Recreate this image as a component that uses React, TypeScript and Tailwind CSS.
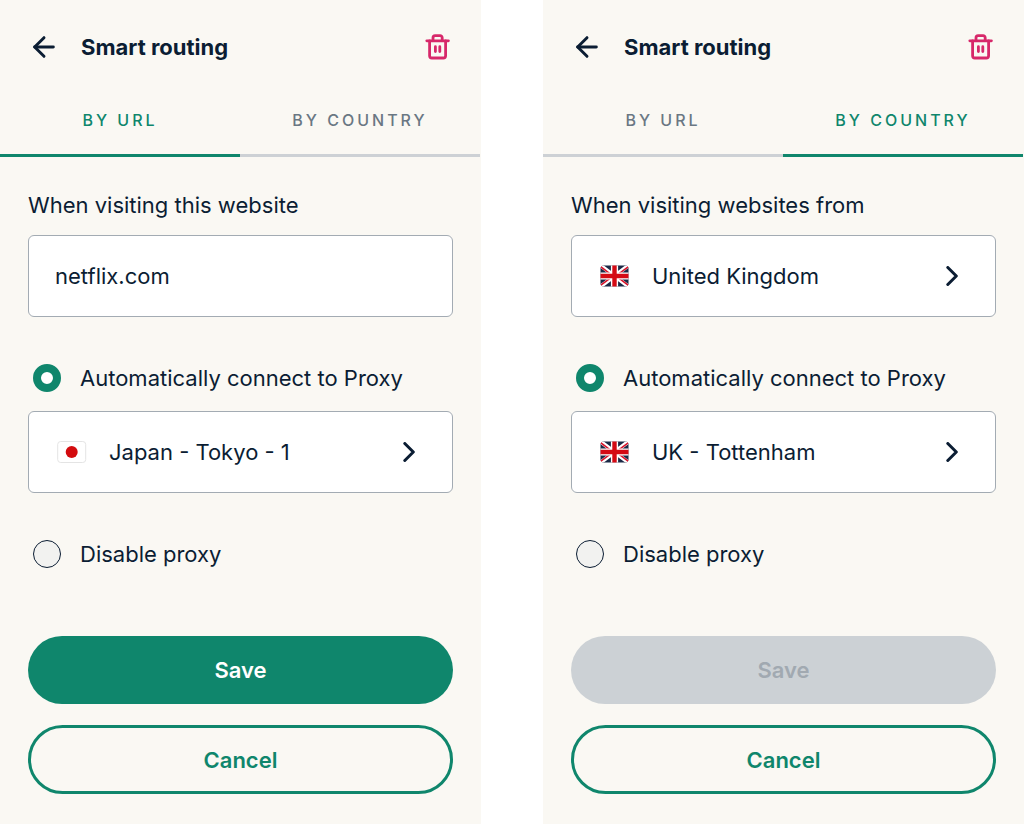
import { useId, useState } from "react";
import { ArrowLeft } from "lucide-react";
import clsx from "clsx";

type Mode = "url" | "country";
type Country = "jp" | "uk";

function TrashIcon() {
  return (
    <svg
      width="26"
      height="26"
      viewBox="0 0 26 26"
      fill="none"
      stroke="currentColor"
      strokeWidth="2.8"
      strokeLinecap="round"
      strokeLinejoin="round"
      aria-hidden="true"
    >
      <path d="M1.8 6.8h21.6" />
      <path d="M4.6 7v14.7a2.3 2.3 0 0 0 2.3 2.3h11.4a2.3 2.3 0 0 0 2.3-2.3V7" />
      <path d="M8 6.5V3.7a2.1 2.1 0 0 1 2.1-2.1h5a2.1 2.1 0 0 1 2.1 2.1v2.8" />
      <path d="M10.4 12.7v4.9M14.8 12.7v4.9" />
    </svg>
  );
}

function ChevronIcon() {
  return (
    <svg
      width="12"
      height="20"
      viewBox="0 0 12 20"
      fill="none"
      stroke="currentColor"
      strokeWidth="3"
      strokeLinecap="round"
      strokeLinejoin="round"
      aria-hidden="true"
    >
      <path d="M1.8 1.5 10.3 10l-8.5 8.5" />
    </svg>
  );
}

function Flag({ country }: { country: Country }) {
  const clip = useId();

  if (country === "jp") {
    return (
      <svg width="30" height="22" viewBox="0 0 30 22" aria-hidden="true">
        <rect x="0.7" y="0.5" width="28" height="21" rx="3" fill="#fff" stroke="#e4e4e4" />
        <circle cx="14.7" cy="11" r="6" fill="#d30b0e" />
      </svg>
    );
  }

  return (
    <svg width="30" height="22" viewBox="0 0 30 22" aria-hidden="true">
      <clipPath id={clip}>
        <rect x="0.5" y="0.5" width="28" height="21" rx="3" />
      </clipPath>
      <g clipPath={`url(#${clip})`}>
        <rect width="30" height="22" fill="#1a2845" />
        <path d="M.5 .5l28 21M28.5 .5l-28 21" stroke="#fff" strokeWidth="4" />
        <path
          d="M0 1.2l10.5 7.9M29 20.8l-10.5-7.9M28.8 1.4l-10.4 7.8M.2 20.6l10.4-7.8"
          stroke="#d8142b"
          strokeWidth="1.5"
        />
        <path d="M14.5 0v22M0 11h30" stroke="#fff" strokeWidth="7.2" />
        <path d="M14.5 0v22M0 11h30" stroke="#d40a14" strokeWidth="4.4" />
      </g>
    </svg>
  );
}

function LocationButton({
  country,
  name,
  label,
  className,
}: {
  country: Country;
  name: string;
  label: string;
  className?: string;
}) {
  return (
    <button
      type="button"
      aria-label={`${label}: ${name}`}
      className={clsx(
        "flex h-[82px] w-full items-center rounded-md border border-[#a3abb3] bg-white pr-[37px] pl-7 text-left",
        className
      )}
    >
      <Flag country={country} />
      <span className="ml-[22px] flex-1">{name}</span>
      <ChevronIcon />
    </button>
  );
}

function Radio({
  name,
  label,
  checked,
  onChange,
}: {
  name: string;
  label: string;
  checked: boolean;
  onChange: () => void;
}) {
  return (
    <label className="mt-[47px] flex items-center gap-[19px] pl-[5px]">
      <input
        type="radio"
        name={name}
        checked={checked}
        onChange={onChange}
        className="size-7 shrink-0 appearance-none rounded-full border border-[#0b1d33] bg-[#f2f2f0] checked:border-8 checked:border-[#0f866c] checked:bg-white"
      />
      {label}
    </label>
  );
}

function SmartRouting({
  initialMode,
  proxy,
  proxyCountry,
  canSave,
}: {
  initialMode: Mode;
  proxy: string;
  proxyCountry: Country;
  canSave: boolean;
}) {
  const id = useId();
  const [mode, setMode] = useState<Mode>(initialMode);
  const [url, setUrl] = useState("netflix.com");
  const [action, setAction] = useState("connect");

  const tabClass = (active: boolean) =>
    clsx(
      "flex-1 border-b-3 pt-[14px] pb-[22px] text-base leading-6 font-medium tracking-[3px]",
      active ? "border-[#0f866c] text-[#0f866c]" : "border-[#cdd1d5] text-[#6a7783]"
    );

  return (
    <section className="min-h-screen bg-[#faf8f3] pb-[30px] text-[22px] leading-7 text-[#0b1d33]">
      <header className="flex h-[94px] items-center pr-[30px] pl-7">
        <button type="button" aria-label="Back">
          <ArrowLeft size={32} strokeWidth={2.2} />
        </button>
        <h1 className="ml-[21px] flex-1 font-bold">Smart routing</h1>
        <button type="button" aria-label="Delete rule" className="text-[#d7286a]">
          <TrashIcon />
        </button>
      </header>

      <div role="tablist" className="mr-px flex">
        <button
          type="button"
          role="tab"
          aria-selected={mode === "url"}
          onClick={() => setMode("url")}
          className={tabClass(mode === "url")}
        >
          BY URL
        </button>
        <button
          type="button"
          role="tab"
          aria-selected={mode === "country"}
          onClick={() => setMode("country")}
          className={tabClass(mode === "country")}
        >
          BY COUNTRY
        </button>
      </div>

      <form className="px-7 pt-[34px]" onSubmit={(e) => e.preventDefault()}>
        {mode === "url" ? (
          <>
            <label htmlFor={`${id}-url`} className="block">
              When visiting this website
            </label>
            <input
              id={`${id}-url`}
              type="text"
              value={url}
              onChange={(e) => setUrl(e.target.value)}
              className="mt-4 block h-[82px] w-full rounded-md border border-[#a3abb3] bg-white px-[26px]"
            />
          </>
        ) : (
          <>
            <p>When visiting websites from</p>
            <LocationButton
              country="uk"
              name="United Kingdom"
              label="When visiting websites from"
              className="mt-4"
            />
          </>
        )}

        <Radio
          name={`${id}-action`}
          label="Automatically connect to Proxy"
          checked={action === "connect"}
          onChange={() => setAction("connect")}
        />
        <LocationButton country={proxyCountry} name={proxy} label="Proxy" className="mt-[19px]" />
        <Radio
          name={`${id}-action`}
          label="Disable proxy"
          checked={action === "disable"}
          onChange={() => setAction("disable")}
        />

        <button
          type="submit"
          disabled={!canSave}
          className="mt-[68px] h-[68px] w-full rounded-full bg-[#0f866c] font-semibold text-white disabled:bg-[#ccd1d5] disabled:text-[#a1a9b1]"
        >
          Save
        </button>
        <button
          type="button"
          className="mt-[21px] h-[69px] w-full rounded-full border-3 border-[#0f866c] font-semibold text-[#0f866c]"
        >
          Cancel
        </button>
      </form>
    </section>
  );
}

export default function App() {
  return (
    <main className="grid min-h-screen grid-cols-2 gap-[62px] bg-white font-['Inter',sans-serif]">
      <SmartRouting initialMode="url" proxy="Japan - Tokyo - 1" proxyCountry="jp" canSave />
      <SmartRouting initialMode="country" proxy="UK - Tottenham" proxyCountry="uk" canSave={false} />
    </main>
  );
}
